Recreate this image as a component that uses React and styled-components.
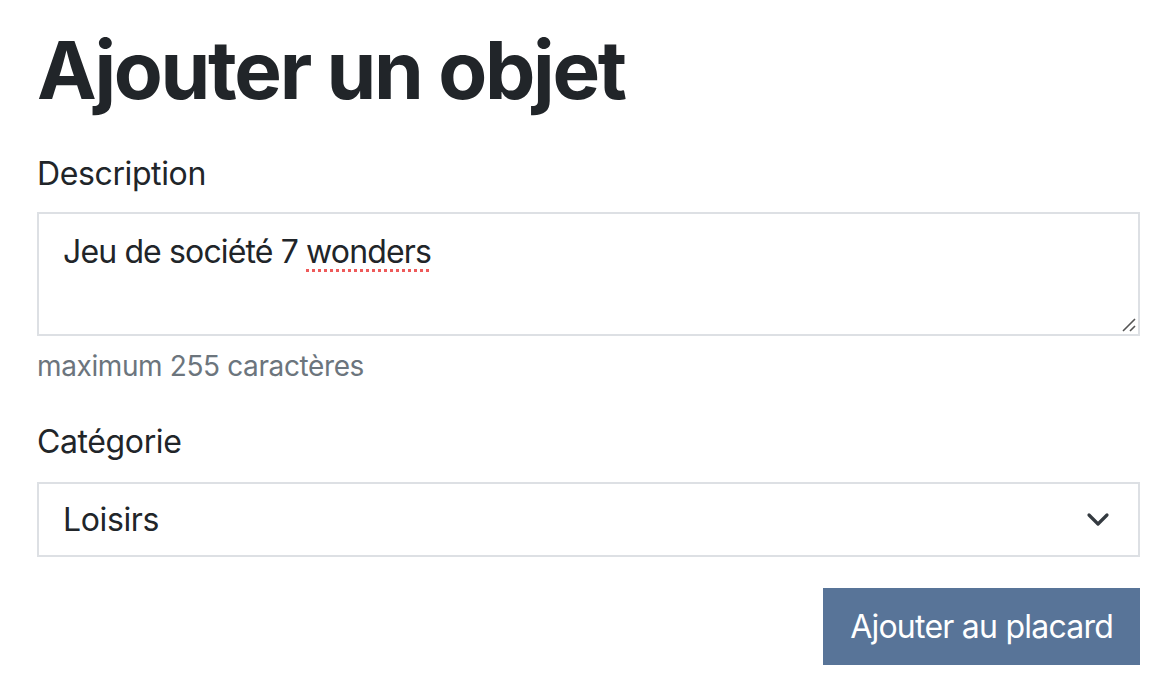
import styled, { createGlobalStyle } from 'styled-components';

const GlobalStyle = createGlobalStyle`
    html, body {
        margin: 0;
        padding: 0;
        background: #fff;
    }
    body {
        font-family: Inter, "Noto Sans", "Liberation Sans", sans-serif;
        color: #212529;
        letter-spacing: -0.024em;
    }
`;

const Page = styled.div`
    width: 1103px;
    padding: 22px 0 0 37px;
`;

const Title = styled.h1`
    margin: 0 0 32px;
    font-size: 80px;
    font-weight: 700;
    line-height: 1.2;
    letter-spacing: -2.3px;
`;

const FormGroup = styled.div`
    margin-bottom: 31px;
`;

const Label = styled.label`
    display: block;
    margin-bottom: ${(p) => p.$gap || 14}px;
    font-size: 32px;
    line-height: 1.5;
`;

const Field = styled.div`
    position: relative;
`;

const TextArea = styled.div`
    box-sizing: border-box;
    height: 124px;
    padding: 14px 24px 6px;
    border: 2px solid #dde0e4;
    font-size: 32px;
    line-height: 1.5;
    letter-spacing: -0.027em;
    color: #212529;
    overflow: auto;
    outline: none;
`;

const Grip = styled.svg`
    position: absolute;
    right: 3px;
    bottom: 3px;
`;

const Misspelled = styled.span`
    text-decoration: underline dotted #ee5a5a;
    text-decoration-thickness: 3px;
    text-underline-offset: 6px;
`;

const HelpText = styled.small`
    display: block;
    margin-top: 9px;
    font-size: 28px;
    line-height: 1.5;
    color: #6c757d;
`;

const SelectBox = styled.div`
    box-sizing: border-box;
    height: 75px;
    display: flex;
    align-items: center;
    justify-content: space-between;
    padding: 0 28px 0 24px;
    border: 2px solid #dde0e4;
    font-size: 32px;
    line-height: 1.5;
`;

const Actions = styled.div`
    display: flex;
    justify-content: flex-end;
    margin-top: 6px;
`;

const Button = styled.button`
    height: 77px;
    padding: 0 27px;
    border: 0;
    background: #587498;
    color: #fff;
    font-family: inherit;
    font-size: 32px;
    line-height: 1.5;
    letter-spacing: -0.024em;
    cursor: pointer;
`;

const Chevron = () => (
    <svg width="24" height="16" viewBox="0 0 24 16" fill="none">
        <path d="M3 3l9 9 9-9" stroke="#343a40" strokeWidth="3.2" strokeLinecap="round" strokeLinejoin="round" />
    </svg>
);

const ResizeGrip = () => (
    <Grip width="16" height="16" viewBox="0 0 16 16" fill="none">
        <path d="M2 14L14 2M9 14l5-5" stroke="#555" strokeWidth="1.6" />
    </Grip>
);

const App = () => {
    return (
        <Page>
            <GlobalStyle />
            <Title>Ajouter un objet</Title>
            <FormGroup>
                <Label>Description</Label>
                <Field>
                    <TextArea role="textbox" contentEditable suppressContentEditableWarning spellCheck={false}>
                        Jeu de société 7 <Misspelled>wonders</Misspelled>
                    </TextArea>
                    <ResizeGrip />
                </Field>
                <HelpText>maximum 255 caractères</HelpText>
            </FormGroup>
            <FormGroup>
                <Label $gap={16}>Catégorie</Label>
                <SelectBox role="combobox">
                    <span>Loisirs</span>
                    <Chevron />
                </SelectBox>
            </FormGroup>
            <Actions>
                <Button>Ajouter au placard</Button>
            </Actions>
        </Page>
    );
};

export default App;
